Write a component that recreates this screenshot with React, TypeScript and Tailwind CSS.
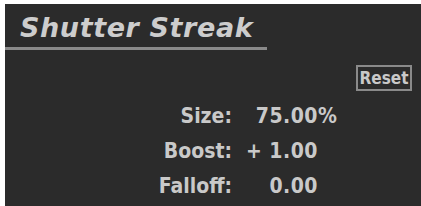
export default function App() {
  const rows = [
    { label: 'Size:', value: '75.00', suffix: '%' },
    { label: 'Boost:', value: '+ 1.00', suffix: '' },
    { label: 'Falloff:', value: '0.00', suffix: '' },
  ];

  const condensed = '"DejaVu Sans Condensed", "DejaVu Sans", sans-serif';

  return (
    <div className="w-[421px] h-[206px] bg-white pl-[5px] pt-[4px]">
      <div className="h-full bg-[#2b2b2b] text-[#c9c9c9]">
        {/* Title */}
        <div className="pt-[8px] pl-[15px]">
          <span
            className="block text-[27px] leading-[31px] font-bold italic tracking-[0.6px] text-[#cdcdcd]"
            style={{ fontFamily: '"DejaVu Sans", sans-serif' }}
          >
            Shutter Streak
          </span>
        </div>
        <div className="mt-[4px] w-[262px] h-[3px] bg-[#8a8a8a]" />

        {/* Reset */}
        <div className="flex justify-end pr-[9px] mt-[15px]">
          <button
            className="w-[56px] h-[26px] border-2 border-[#8a8a8a] text-[17px] leading-none font-bold flex items-center justify-center"
            style={{ fontFamily: condensed }}
          >
            Reset
          </button>
        </div>

        {/* Parameters */}
        <div className="mt-[8px] text-[21px] font-bold whitespace-nowrap" style={{ fontFamily: condensed }}>
          {rows.map((r) => (
            <div key={r.label} className="flex h-[35px] leading-[35px]">
              <span className="w-[227px] text-right">{r.label}</span>
              <span className="w-[86px] text-right tracking-[0.5px]">{r.value}</span>
              <span>{r.suffix}</span>
            </div>
          ))}
        </div>
      </div>
    </div>
  );
}
